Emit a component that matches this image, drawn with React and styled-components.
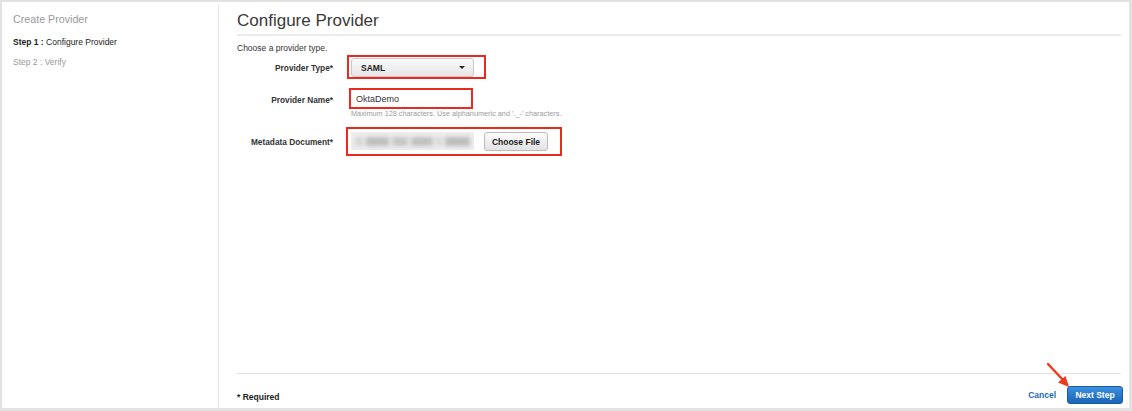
import React from "react";
import styled, { createGlobalStyle } from "styled-components";

const Global = createGlobalStyle`
  html, body { margin: 0; padding: 0; background: #fff; }
  body { font-family: "Liberation Sans", Arial, sans-serif; color: #333; }
  * { box-sizing: border-box; }
`;

const Frame = styled.div`
  position: relative;
  width: 1132px;
  height: 411px;
  border-style: solid;
  border-color: #e2e2e2;
  border-width: 2px 3px 3px 2px;
  display: flex;
  background: #fff;
`;

const Sidebar = styled.nav`
  width: 217px;
  flex: none;
  margin-top: 3px;
  padding: 7px 0 0 11px;
  border-right: 1px solid #e4e4e4;
`;

const SideTitle = styled.div`
  font-size: 10.7px;
  line-height: 14px;
  color: #9a9a9a;
  margin-bottom: 11px;
`;

const Step = styled.div`
  font-size: 8.5px;
  line-height: 10px;
  color: ${(p) => (p.$active ? "#222" : "#999")};
  margin-bottom: 10px;
  b { font-weight: bold; }
`;

const Main = styled.main`
  flex: 1;
  display: flex;
  flex-direction: column;
  padding: 9px 6px 0 18px;
  min-width: 0;
`;

const Title = styled.h1`
  margin: 0 2px 0 0;
  font-size: 17px;
  font-weight: normal;
  line-height: 20px;
  color: #3a3a3a;
  padding-bottom: 3px;
  border-bottom: 2px solid #ebebeb;
`;

const Body = styled.section`
  flex: 1;
`;

const Intro = styled.p`
  margin: 7px 0 0;
  font-size: 8.5px;
  line-height: 10px;
  color: #333;
`;

const Row = styled.div`
  display: grid;
  grid-template-columns: 96px 1fr;
  column-gap: 13px;
  align-items: center;
  margin-top: ${(p) => p.$mt || 0}px;
`;

const Label = styled.label`
  text-align: right;
  font-size: 8.3px;
  font-weight: bold;
  color: #333;
  line-height: 10px;
  padding-top: ${(p) => p.$pt || 0}px;
`;

const Highlight = styled.div`
  justify-self: start;
  display: flex;
  align-items: flex-start;
  gap: 10px;
  border: 2px solid #ea2a1e;
  margin-left: ${(p) => p.$ml || 0}px;
  padding: ${(p) => p.$pad};
`;

const Select = styled.div`
  width: 123px;
  height: 19px;
  border: 1px solid #c9c9c9;
  border-radius: 3px;
  background: linear-gradient(#fafafa, #e6e6e6);
  display: flex;
  align-items: center;
  justify-content: space-between;
  padding: 0 8px 0 9px;
  font-size: 8.5px;
  font-weight: bold;
  color: #222;
`;

const Caret = styled.span`
  width: 0;
  height: 0;
  border-left: 3px solid transparent;
  border-right: 3px solid transparent;
  border-top: 3px solid #222;
`;

const TextInput = styled.div`
  margin-left: 3px;
  justify-self: start;
  width: 124px;
  height: 21px;
  border: 2px solid #ea2a1e;
  padding: 0 0 0 5px;
  display: flex;
  align-items: center;
  font-size: 9px;
  color: #333;
`;

const Hint = styled.div`
  grid-column: 2;
  margin: 1px 0 0 5px;
  font-size: 7.3px;
  line-height: 8px;
  color: #9b9b9b;
`;

const FileName = styled.div`
  width: 123px;
  height: 18px;
  background: #eeeeee;
  display: flex;
  align-items: center;
  padding: 0 4px;
  gap: 3px;
  overflow: hidden;
`;

const Blur = styled.span`
  display: block;
  height: 9px;
  width: ${(p) => p.$w}px;
  background: ${(p) => p.$c};
  filter: blur(2.2px);
`;

const GrayButton = styled.button`
  height: 19px;
  width: 64px;
  padding: 0;
  border: 1px solid #bdbdbd;
  border-radius: 3px;
  background: linear-gradient(#fbfbfb, #e3e3e3);
  font-family: inherit;
  font-size: 8.5px;
  font-weight: bold;
  color: #222;
`;

const Footer = styled.footer`
  border-top: 1px solid #e2e2e2;
  margin-right: 2px;
  display: flex;
  align-items: flex-start;
  padding: 12px 0 4px;
  height: 35px;
`;

const Required = styled.span`
  margin-top: 6px;
  font-size: 8.5px;
  font-weight: bold;
  color: #222;
  margin-right: auto;
`;

const Cancel = styled.a`
  margin-top: 4px;
  margin-right: 11px;
  font-size: 8.5px;
  font-weight: bold;
  color: #1e6ab8;
  text-decoration: none;
`;

const Primary = styled.button`
  width: 56px;
  height: 18px;
  padding: 0;
  margin-right: -2px;
  border: 1px solid #1a5aa6;
  border-radius: 3px;
  background: linear-gradient(#3a90dd, #1c64b8);
  color: #fff;
  font-family: inherit;
  font-size: 8.5px;
  font-weight: bold;
`;

const Arrow = styled.svg`
  position: absolute;
  left: 1040px;
  top: 358px;
  width: 30px;
  height: 30px;
  overflow: visible;
`;

export default function App() {
  return (
    <>
      <Global />
      <Frame>
        <Sidebar>
          <SideTitle>Create Provider</SideTitle>
          <Step $active>
            <b>Step 1 :</b> Configure Provider
          </Step>
          <Step>Step 2 : Verify</Step>
        </Sidebar>
        <Main>
          <Title>Configure Provider</Title>
          <Body>
            <Intro>Choose a provider type.</Intro>
            <Row $mt={2}>
              <Label $pt={2}>Provider Type*</Label>
              <Highlight $ml={1} $pad="1px 10px 0 2px">
                <Select>
                  SAML
                  <Caret />
                </Select>
              </Highlight>
            </Row>
            <Row $mt={9}>
              <Label $pt={2}>Provider Name*</Label>
              <TextInput>OktaDemo</TextInput>
              <Hint>Maximum 128 characters. Use alphanumeric and '._-' characters.</Hint>
            </Row>
            <Row $mt={9}>
              <Label>Metadata Document*</Label>
              <Highlight $pad="3px 12px 3px 3px">
                <FileName>
                  <Blur $w={8} $c="#d4d4d4" />
                  <Blur $w={24} $c="#bdbdbd" />
                  <Blur $w={16} $c="#c6c6c6" />
                  <Blur $w={22} $c="#c0c0c0" />
                  <Blur $w={6} $c="#d6d6d6" />
                  <Blur $w={26} $c="#bbbbbb" />
                </FileName>
                <GrayButton>Choose File</GrayButton>
              </Highlight>
            </Row>
          </Body>
          <Footer>
            <Required>* Required</Required>
            <Cancel href="#">Cancel</Cancel>
            <Primary>Next Step</Primary>
          </Footer>
        </Main>
        <Arrow viewBox="0 0 30 30">
          <path d="M6 4 L22 21" stroke="#ec3a1d" strokeWidth="2.4" strokeLinecap="round" />
          <path d="M27 27 L16 22.5 L23.5 16 Z" fill="#ec3a1d" />
        </Arrow>
      </Frame>
    </>
  );
}
